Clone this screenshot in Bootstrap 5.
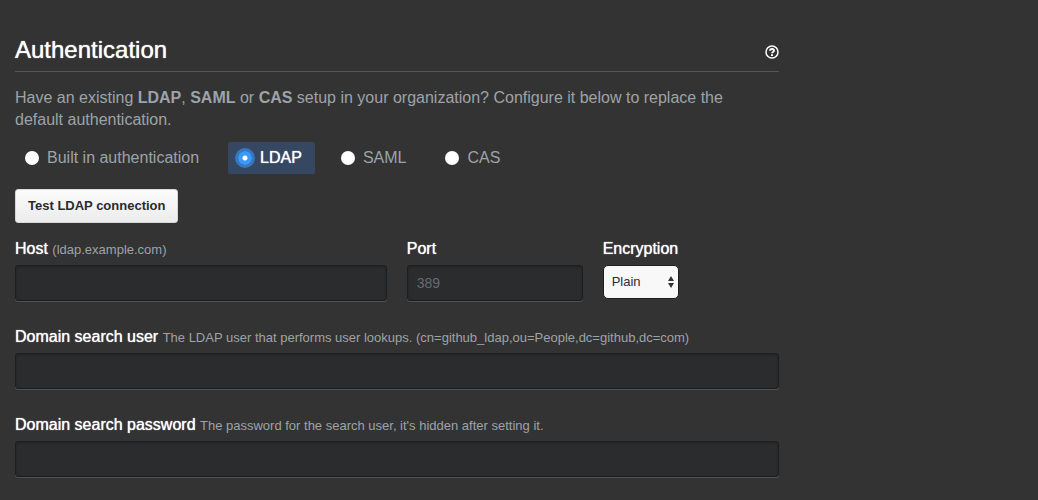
<!DOCTYPE html>
<html lang="en">
<head>
<meta charset="utf-8">
<meta name="viewport" content="width=device-width, initial-scale=1">
<title>Authentication</title>
<link href="https://cdn.jsdelivr.net/npm/bootstrap@5.3.0/dist/css/bootstrap.min.css" rel="stylesheet">
<style>
  body { background: #333; color: #9da3a8; font: 16px/22px "Liberation Sans", Arial, sans-serif; }
  .settings { padding: 32px 0 20px 15px; }
  .settings-head { border-bottom: 1px solid #555; padding-bottom: 3px; margin-bottom: 15px; }
  .settings-head h1 { font-size: 24px; line-height: 36px; font-weight: 400; }
  .strong-text { color: #fff; text-shadow: 0 0 1px #fff; }
  .intro { margin-bottom: 11px; padding-right: 20px; }
  .methods { gap: 16px; margin-bottom: 15px; }
  .method { gap: 8px; height: 32px; padding: 0 13px 0 10px; border-radius: 2px; cursor: pointer; }
  .method input { appearance: none; width: 14px; height: 14px; margin: 0; border-radius: 50%; background: #fff; }
  .method input:checked { background: radial-gradient(circle, #fff 0 2px, #3b99fc 3px); box-shadow: 0 0 0 3px #3578bd; }
  .method:has(input:checked) { background: #364761; color: #fff; text-shadow: 0 0 1px #fff; }
  .btn-test { height: 34px; padding: 0 12px; font-size: 13px; line-height: 20px; font-weight: 700; color: #2b2b2b;
    background: linear-gradient(#fcfcfc, #ececec); border: 1px solid #d8d8d8; border-radius: 3px; margin-bottom: 15px; }
  .btn-test:hover { background: #eee; color: #222; }
  .fields { display: grid; grid-template-columns: repeat(4, 1fr); gap: 25px 20px; }
  .span-half { grid-column: span 2; }
  .span-all { grid-column: 1 / -1; }
  .fields label { display: block; margin-bottom: 5px; }
  .hint { font-size: 13px; line-height: 16px; color: #9da3a8; text-shadow: none; }
  .form-control, .form-control:focus { height: 36px; padding: 0 9px; font-size: 14px; color: #ddd; background: #2b2c2e;
    border: 1px solid #1c1f20; border-radius: 3px; box-shadow: 0 1px 0 #505050, inset 0 1px 2px #222; }
  .form-control::placeholder { color: #686a6c; }
  .form-select { width: 76px; height: 34px; padding: 0 8px; font-size: 13px; line-height: 20px; color: #2a2d3a; border: 1px solid #1c1f20; border-radius: 5px;
    background: #f8f8f8 url("data:image/svg+xml,%3Csvg xmlns='http://www.w3.org/2000/svg' viewBox='0 0 6 12'%3E%3Cpath fill='%23333' d='M0 5 3 0l3 5zM0 7h6l-3 5z'/%3E%3C/svg%3E") no-repeat right 4px center / 6px 12px; }
</style>
</head>
<body>
<div class="row g-0">
  <main class="col-9 settings">
    <header class="settings-head d-flex align-items-center justify-content-between">
      <h1 class="strong-text m-0">Authentication</h1>
      <a href="#help" class="d-flex pt-1" aria-label="Help">
        <svg width="14" height="14" viewBox="0 0 14 14" fill="none" stroke="#fff">
          <circle cx="7" cy="7" r="6" stroke-width="1.5"/>
          <path d="M5 5.700c0-2.300 4-2.300 4 0C9 7 7 6.900 7 8.300" stroke-width="1.800"/>
          <path d="M7 9.200v1.800" stroke-width="2"/>
        </svg>
      </a>
    </header>
    <p class="intro">Have an existing <strong>LDAP</strong>, <strong>SAML</strong> or <strong>CAS</strong> setup in your organization? Configure it below to replace the default authentication.</p>
    <form>
      <div class="methods d-flex flex-wrap">
        <label class="method d-flex align-items-center"><input type="radio" name="method">Built in authentication</label>
        <label class="method d-flex align-items-center"><input type="radio" name="method" checked>LDAP</label>
        <label class="method d-flex align-items-center"><input type="radio" name="method">SAML</label>
        <label class="method d-flex align-items-center"><input type="radio" name="method">CAS</label>
      </div>
      <button type="button" class="btn btn-test">Test LDAP connection</button>
      <div class="fields">
        <div class="span-half">
          <label for="host" class="strong-text">Host <span class="hint">(ldap.example.com)</span></label>
          <input id="host" type="text" class="form-control">
        </div>
        <div>
          <label for="port" class="strong-text">Port</label>
          <input id="port" type="text" class="form-control" placeholder="389">
        </div>
        <div>
          <label for="encryption" class="strong-text">Encryption</label>
          <select id="encryption" class="form-select"><option>Plain</option></select>
        </div>
        <div class="span-all">
          <label for="user" class="strong-text">Domain search user <span class="hint">The LDAP user that performs user lookups. (cn=github_ldap,ou=People,dc=github,dc=com)</span></label>
          <input id="user" type="text" class="form-control">
        </div>
        <div class="span-all">
          <label for="password" class="strong-text">Domain search password <span class="hint">The password for the search user, it's hidden after setting it.</span></label>
          <input id="password" type="password" class="form-control">
        </div>
      </div>
    </form>
  </main>
</div>
<script src="https://cdn.jsdelivr.net/npm/bootstrap@5.3.0/dist/js/bootstrap.bundle.min.js"></script>
</body>
</html>
